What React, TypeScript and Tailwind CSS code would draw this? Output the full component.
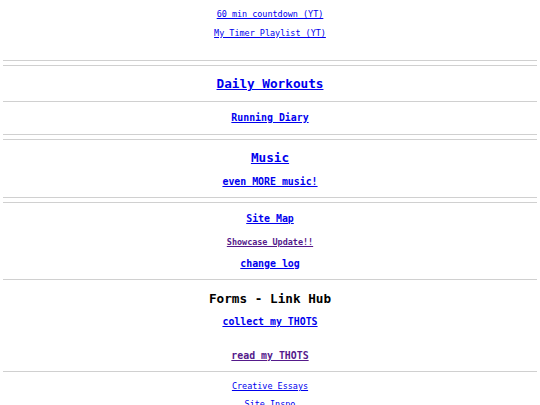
import React from "react";

const blue = "text-[#0000EE]";
const purple = "text-[#551A8B]";

function Rule({ className = "" }: { className?: string }) {
  return <div className={`mx-[3px] h-px bg-[#d0d0d0] ${className}`} />;
}

function Row({
  h,
  children,
  className = "",
}: {
  h: string;
  children: React.ReactNode;
  className?: string;
}) {
  return (
    <div className={`flex items-center justify-center whitespace-pre pt-[2px] ${h} ${className}`}>
      {children}
    </div>
  );
}

export default function App() {
  return (
    <div
      className="min-h-screen bg-white text-black"
      style={{ fontFamily: '"DejaVu Sans Mono", "Liberation Mono", monospace' }}
    >
      {/* timers */}
      <Row h="h-[18px]" className="mt-[4px]">
        <a href="#" className={`${blue} text-[8.45px] underline`}>60 min countdown (YT)</a>
      </Row>
      <Row h="h-[20px]">
        <a href="#" className={`${blue} text-[8.45px] underline`}>My Timer Playlist (YT)</a>
      </Row>

      <Rule className="mt-[18px]" />
      <Rule className="mt-[4px]" />

      {/* workouts */}
      <Row h="h-[34px]">
        <a href="#" className={`${blue} text-[12.7px] font-bold underline`}>Daily Workouts</a>
      </Row>
      <Rule className="mt-[1px]" />
      <Row h="h-[30px]">
        <a href="#" className={`${blue} text-[9.9px] font-bold underline`}>Running Diary</a>
      </Row>

      <Rule className="mt-[2px]" />
      <Rule className="mt-[4px]" />

      {/* music */}
      <Row h="h-[34px]">
        <a href="#" className={`${blue} text-[12.7px] font-bold underline`}>Music</a>
      </Row>
      <Row h="h-[14px]">
        <a href="#" className={`${blue} text-[9.9px] font-bold underline`}>even MORE music!</a>
      </Row>

      <Rule className="mt-[9px]" />
      <Rule className="mt-[4px]" />

      {/* site */}
      <Row h="h-[30px]">
        <a href="#" className={`${blue} text-[9.9px] font-bold underline`}>Site Map</a>
      </Row>
      <Row h="h-[16px]">
        <a href="#" className={`${purple} text-[8.45px] font-bold underline`}>Showcase Update!!</a>
      </Row>
      <Row h="h-[28px]">
        <a href="#" className={`${blue} text-[9.9px] font-bold underline`}>change log</a>
      </Row>

      <Rule className="mt-[2px]" />

      {/* forms */}
      <Row h="h-[36px]">
        <h2 className="text-[12.7px] font-bold">Forms - Link Hub</h2>
      </Row>
      <Row h="h-[10px]">
        <a href="#" className={`${blue} text-[9.9px] font-bold underline`}>collect my THOTS</a>
      </Row>
      <Row h="h-[30px]" className="mt-[14px]">
        <a href="#" className={`${purple} text-[9.9px] font-bold underline`}>read my THOTS</a>
      </Row>

      <Rule className="mt-[1px]" />

      {/* writing */}
      <Row h="h-[26px]">
        <a href="#" className={`${blue} text-[8.45px] underline`}>Creative Essays</a>
      </Row>
      <Row h="h-[10px]">
        <a href="#" className={`${blue} text-[8.45px] underline`}>Site Inspo</a>
      </Row>
      <div className="h-[20px]" />
    </div>
  );
}
